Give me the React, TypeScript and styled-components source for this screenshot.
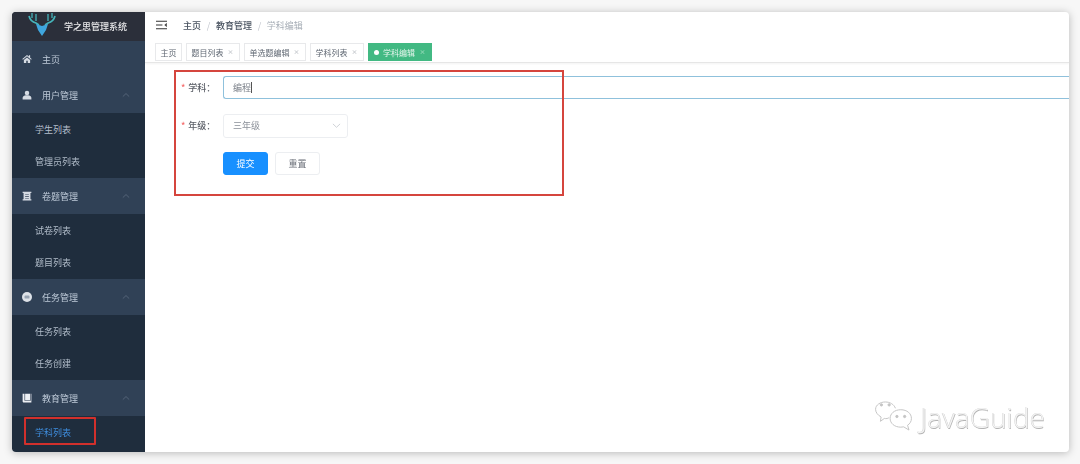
import React from "react";
import styled, { createGlobalStyle } from "styled-components";

const GlobalStyle = createGlobalStyle`
  html, body {
    margin: 0;
    padding: 0;
    background: #f7f7f7;
    overflow: hidden;
  }
  body {
    font-family: "Noto Sans CJK SC", "Noto Sans", sans-serif;
  }
`;

const Page = styled.div`
  width: 1080px;
  height: 464px;
  padding: 12px 11px 12px 12px;
  box-sizing: border-box;
  position: relative;
`;

const Window = styled.div`
  display: flex;
  height: 440px;
  background: #fff;
  border-radius: 4px;
  overflow: hidden;
  box-shadow: 0 1px 8px rgba(0, 0, 0, 0.26);
  filter: blur(0.3px);
`;

const Sidebar = styled.aside`
  width: 133px;
  flex: none;
  background: #1f2d3d;
  display: flex;
  flex-direction: column;
`;

const Logo = styled.div`
  height: 29px;
  flex: none;
  background: #2b2f3a;
  display: flex;
  align-items: center;
  padding-left: 16px;
  gap: 8px;
  color: #e8e8ea;
  font-size: 9px;
  font-weight: 500;
  overflow: hidden;
`;

const MenuRow = styled.div`
  height: 36px;
  flex: none;
  background: #304156;
  display: flex;
  align-items: center;
  padding: 0 15px 0 10px;
  color: #bfcbd9;
  font-size: 9px;
  box-sizing: border-box;

  svg.icon {
    width: 10px;
    height: 10px;
    margin-right: 10px;
    flex: none;
  }

  svg.chevron {
    margin-left: auto;
    width: 8px;
    height: 8px;
  }
`;

const SubRow = styled.div<{ $active?: boolean }>`
  height: 32.5px;
  flex: none;
  display: flex;
  align-items: center;
  padding-left: 23px;
  background: #1f2d3d;
  color: ${(p) => (p.$active ? "#3f8fe0" : "#b4bfcc")};
  font-size: 9px;
  position: relative;
`;

const SideMark = styled.span`
  position: absolute;
  left: 12px;
  top: 1px;
  width: 68px;
  height: 24px;
  border: 2px solid #d2302c;
  border-radius: 1px;
`;

const Main = styled.main`
  flex: 1;
  min-width: 0;
  display: flex;
  flex-direction: column;
  position: relative;
`;

const TopBar = styled.header`
  height: 29px;
  flex: none;
  display: flex;
  align-items: center;
  padding: 0 0 3px 11px;
  box-sizing: border-box;
  font-size: 9px;
  color: #48576a;

  svg {
    width: 11px;
    height: 10px;
    margin-right: 16px;
  }
`;

const Crumb = styled.span<{ $last?: boolean }>`
  color: ${(p) => (p.$last ? "#a5acb5" : "#4a5461")};
  font-weight: ${(p) => (p.$last ? 400 : 500)};
`;

const CrumbSep = styled.span`
  margin: 0 5.7px;
  color: #c0c4cc;
`;

const TagBar = styled.nav`
  height: 22px;
  flex: none;
  display: flex;
  align-items: flex-start;
  gap: 4px;
  padding: 2px 0 0 10px;
  border-bottom: 1px solid #e6e6e6;
  box-shadow: 0 1px 2px rgba(0, 0, 0, 0.05);
  box-sizing: border-box;
`;

const Tag = styled.div<{ $active?: boolean }>`
  height: 18px;
  box-sizing: border-box;
  padding: 0 4.5px;
  display: flex;
  align-items: center;
  gap: ${(p) => (p.$active ? "4.5px" : "4px")};
  font-size: 8px;
  white-space: nowrap;
  color: ${(p) => (p.$active ? "#e4f5ec" : "#5f6772")};
  background: ${(p) => (p.$active ? "#42b983" : "#fff")};
  border: 1px solid ${(p) => (p.$active ? "#42b983" : "#e8e9eb")};
`;

const TagDot = styled.i`
  width: 5px;
  height: 5px;
  border-radius: 50%;
  background: #fff;
`;

const TagClose = styled.span<{ $light?: boolean }>`
  width: 4px;
  margin-right: 3px;
  font-size: 6px;
  color: ${(p) => (p.$light ? "#b5e6cd" : "#a3a9b0")};
  line-height: 1;
`;

const Form = styled.form`
  display: flex;
  flex-direction: column;
  padding: 13px 0 0 36px;
  position: relative;
`;

const Field = styled.div`
  display: flex;
  align-items: center;
  height: 23px;
  margin-bottom: 15px;
`;

const Label = styled.label`
  width: 42px;
  flex: none;
  font-size: 9px;
  color: #5a5e66;
  font-weight: 500;

  &::before {
    content: "*";
    color: #f56c6c;
    margin-right: 3px;
  }
`;

const TextBox = styled.div`
  flex: 1;
  height: 23px;
  box-sizing: border-box;
  border: 1px solid #8fc1dc;
  border-right: none;
  border-radius: 3px 0 0 3px;
  display: flex;
  align-items: center;
  padding-left: 9px;
  font-size: 9px;
  color: #7b8089;
`;

const Caret = styled.i`
  width: 1px;
  height: 11px;
  background: #555;
`;

const SelectBox = styled.div`
  width: 125px;
  height: 24px;
  box-sizing: border-box;
  border: 1px solid #eceef1;
  border-radius: 3px;
  display: flex;
  align-items: center;
  justify-content: space-between;
  padding: 0 6px 0 9px;
  font-size: 9px;
  color: #8b9099;

  svg {
    width: 9px;
    height: 9px;
  }
`;

const Actions = styled.div`
  display: flex;
  gap: 7px;
  padding-left: 42px;
`;

const Button = styled.button<{ $primary?: boolean }>`
  width: 45px;
  height: 23px;
  padding: 0;
  border-radius: 3px;
  font: inherit;
  font-size: 9px;
  color: ${(p) => (p.$primary ? "#fff" : "#6b7079")};
  background: ${(p) => (p.$primary ? "#1890ff" : "#fff")};
  border: 1px solid ${(p) => (p.$primary ? "#1890ff" : "#eceef1")};
`;

const FormMark = styled.div`
  position: absolute;
  left: 29px;
  top: 7px;
  width: 390px;
  height: 126px;
  box-sizing: border-box;
  border: 2px solid #d5453d;
  pointer-events: none;
`;

const Watermark = styled.div`
  position: absolute;
  right: 35px;
  bottom: 32px;
  display: flex;
  align-items: center;
  gap: 6px;
  color: #f3f3f3;
  font-family: "Open Sans", "Liberation Sans", sans-serif;
  font-size: 28px;
  font-weight: 300;
  line-height: 1;
  text-shadow: 0.5px 0.5px 0 #b4b4b4, -0.3px 0 0 #cdcdcd;

  svg {
    width: 41px;
    height: 31px;
  }
`;

const HomeIcon = () => (
  <svg className="icon" viewBox="0 0 16 16" fill="#d5dbe3">
    <path d="M8 1.5 0.5 8l1 1L8 3.6 14.5 9l1-1-2.5-2.2V2h-2v2L8 1.5ZM3 9.6V14.5h3.8v-3.6h2.4v3.6H13V9.6L8 5.4 3 9.6Z" />
  </svg>
);

const UserIcon = () => (
  <svg className="icon" viewBox="0 0 16 16" fill="#d5dbe3">
    <circle cx="8" cy="4.6" r="3.6" />
    <path d="M1 15v-2.5C1 10 4 8.800 6 8.400h4c2 .4 5 1.600 5 4.100V15H1Z" />
  </svg>
);

const ScrollIcon = () => (
  <svg className="icon" viewBox="0 0 16 16" fill="#d5dbe3">
    <path d="M1 1h14v2h-1.500v10H15v2H1v-2h1.500V3H1V1Zm4 4v1h6V5H5Zm0 3v1h6V8H5Zm0 3v1h6v-1H5Z" />
  </svg>
);

const ChatIcon = () => (
  <svg className="icon" viewBox="0 0 16 16">
    <circle cx="8" cy="8" r="8" fill="#dde2e8" />
    <rect x="4" y="5.500" width="8" height="5" rx="1.500" fill="#97a3b2" />
  </svg>
);

const BookIcon = () => (
  <svg className="icon" viewBox="0 0 16 16" fill="#eceff3">
    <path d="M1 1h3v11.500h10V1h1v14H3c-1.200 0-2-.8-2-2V1Z" />
    <path d="M5 1h8v10.500H5V1Z" />
  </svg>
);

const Chevron = () => (
  <svg className="chevron" viewBox="0 0 10 10" fill="none" stroke="#5d6c80" strokeWidth="1">
    <path d="M1 7 5 3.2 9 7" />
  </svg>
);

const Deer = () => (
  <svg width="28" height="24" viewBox="0 0 28 24" fill="none" style={{ flex: "none", marginTop: -3 }}>
    <path d="M1 3c1 4 3 6 7 7l3 2M27 3c-1 4-3 6-7 7l-3 2" stroke="#45b4ba" strokeWidth="1.7" />
    <path d="M4 0v5M8 1v7M24 0v5M20 1v7" stroke="#45b4ba" strokeWidth="1.3" />
    <path d="M8 11 14 13 20 11 18 17 14 23 10 17Z" fill="#3fa6de" />
  </svg>
);

type Group = {
  title: string;
  icon: React.ReactNode;
  items: string[];
};

const groups: Group[] = [
  { title: "用户管理", icon: <UserIcon />, items: ["学生列表", "管理员列表"] },
  { title: "卷题管理", icon: <ScrollIcon />, items: ["试卷列表", "题目列表"] },
  { title: "任务管理", icon: <ChatIcon />, items: ["任务列表", "任务创建"] },
  { title: "教育管理", icon: <BookIcon />, items: ["学科列表"] },
];

const tags = ["主页", "题目列表", "单选题编辑", "学科列表"];

export default function App() {
  return (
    <Page>
      <GlobalStyle />
      <Window>
        <Sidebar>
          <Logo>
            <Deer />
            <span>学之思管理系统</span>
          </Logo>
          <MenuRow>
            <HomeIcon />
            主页
          </MenuRow>
          {groups.map((g) => (
            <React.Fragment key={g.title}>
              <MenuRow>
                {g.icon}
                {g.title}
                <Chevron />
              </MenuRow>
              {g.items.map((item) => (
                <SubRow key={item} $active={item === "学科列表"}>
                  {item}
                  {item === "学科列表" && <SideMark />}
                </SubRow>
              ))}
            </React.Fragment>
          ))}
        </Sidebar>
        <Main>
          <TopBar>
            <svg viewBox="0 0 12 10" fill="none" stroke="#333" strokeWidth="1.1">
              <path d="M0 1h12M0 5h7M0 9h12" />
              <path d="M11.500 3.200 9.500 5l2 1.800Z" fill="#333" strokeWidth="0.5" />
            </svg>
            <Crumb>主页</Crumb>
            <CrumbSep>/</CrumbSep>
            <Crumb>教育管理</Crumb>
            <CrumbSep>/</CrumbSep>
            <Crumb $last>学科编辑</Crumb>
          </TopBar>
          <TagBar>
            {tags.map((t) => (
              <Tag key={t}>
                {t}
                {t !== "主页" && <TagClose>×</TagClose>}
              </Tag>
            ))}
            <Tag $active>
              <TagDot />
              学科编辑
              <TagClose $light>×</TagClose>
            </Tag>
          </TagBar>
          <Form>
            <Field>
              <Label>学科：</Label>
              <TextBox>
                编程
                <Caret />
              </TextBox>
            </Field>
            <Field>
              <Label>年级：</Label>
              <SelectBox>
                三年级
                <svg viewBox="0 0 10 10" fill="none" stroke="#c3c7ce" strokeWidth="0.9">
                  <path d="M1 3.200 5 7l4-3.800" />
                </svg>
              </SelectBox>
            </Field>
            <Actions>
              <Button type="button" $primary>
                提交
              </Button>
              <Button type="button">重置</Button>
            </Actions>
            <FormMark />
          </Form>
        </Main>
      </Window>
      <Watermark>
        <svg viewBox="0 0 41 32" fill="none" stroke="#c4c4c4" strokeWidth="1">
          <path d="M16 17c-1 1-3 1.500-5 1l-4 3 .7-4.500C4 14.500 2 11.500 2 8.500 2 4 7 1 12 1c5 0 9 2.500 10.500 6.500" />
          <circle cx="8" cy="4" r="1.200" fill="#c4c4c4" />
          <circle cx="16" cy="4" r="1.200" fill="#c4c4c4" />
          <path d="M28 9c6.500 0 11 4 11 9 0 3-1.500 5.500-4 7l1.500 5-5.500-3.300c-1 .2-2 .3-3 .3-6.500 0-11-4-11-9s4.500-9 11-9Z" />
          <circle cx="24" cy="16" r="1.200" fill="#c4c4c4" />
          <circle cx="32" cy="16" r="1.200" fill="#c4c4c4" />
        </svg>
        JavaGuide
      </Watermark>
    </Page>
  );
}
